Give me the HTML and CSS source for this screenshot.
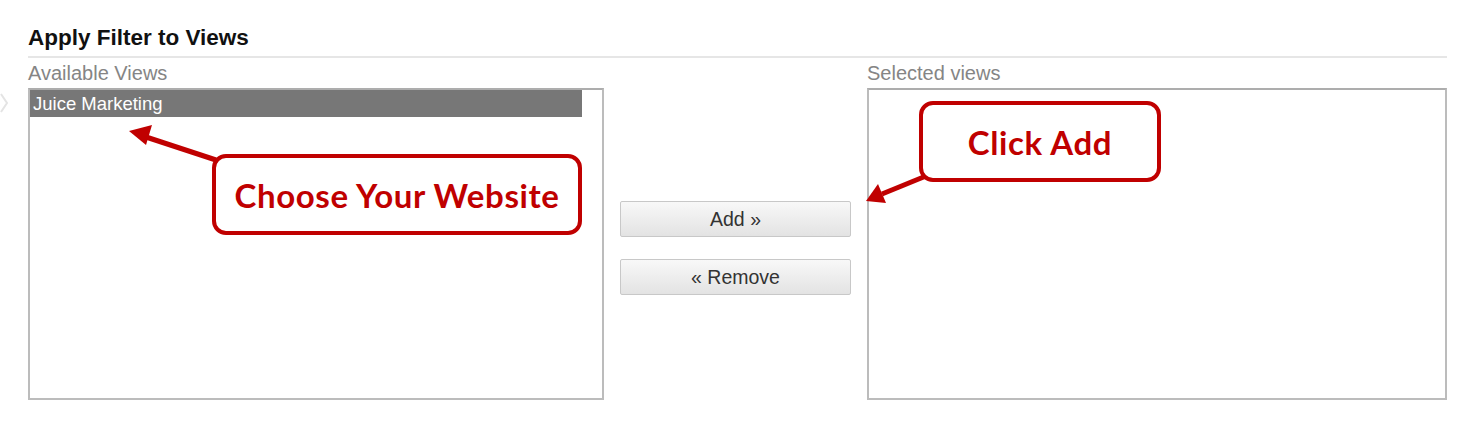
FILE: index.html
```html
<!DOCTYPE html>
<html lang="en">
<head>
    <meta charset="UTF-8">
    <title>Apply Filter to Views</title>
    <link rel="stylesheet" href="styles.css">
</head>
<body>
<div class="page">
    <h2 class="title">Apply Filter to Views</h2>

    <div class="views">
        <div class="col col-left">
            <div class="label">Available Views</div>
            <div class="listbox">
                <div class="item selected">Juice Marketing</div>
            </div>
        </div>

        <div class="col col-mid">
            <button class="btn">Add &raquo;</button>
            <button class="btn">&laquo; Remove</button>
        </div>

        <div class="col col-right">
            <div class="label">Selected views</div>
            <div class="listbox"></div>
        </div>
    </div>

    <!-- annotations drawn over the screenshot -->
    <svg class="arrows" width="1484" height="433" viewBox="0 0 1484 433">
        <polyline points="1,94 7,103 1,112" fill="none" stroke="#e4e4e4" stroke-width="2"/>
        <line x1="216" y1="160" x2="146" y2="137" stroke="#c00000" stroke-width="5"/>
        <polygon points="129,131 152,125 146,145" fill="#c00000"/>
        <line x1="926" y1="176" x2="882" y2="194" stroke="#c00000" stroke-width="5"/>
        <polygon points="866,201 878,184 886,203" fill="#c00000"/>
    </svg>

    <div class="callout callout-choose">Choose Your Website</div>
    <div class="callout callout-add">Click Add</div>
</div>
</body>
</html>
```

FILE: styles.css
```css
body {
    margin: 0;
    background: #fff;
    font-family: "Liberation Sans", Arial, sans-serif;
}
.page {
    position: relative;
    width: 1484px;
    height: 433px;
    padding: 24px 37px 0 28px;
    box-sizing: border-box;
}
.title {
    margin: 0;
    font-size: 22.5px;
    font-weight: bold;
    color: #111;
    line-height: 28px;
    padding-bottom: 4px;
    border-bottom: 2px solid #e6e6e6;
}
.views {
    display: flex;
    gap: 16px;
    margin-top: 4px;
}
.label {
    font-size: 20px;
    color: #858585;
    line-height: 23px;
    margin-bottom: 3px;
}
.col-left {
    width: 576px;
}
.col-right {
    flex: 1;
}
.col-mid {
    width: 231px;
    display: flex;
    flex-direction: column;
    gap: 22px;
    padding-top: 139px;
}
.listbox {
    height: 312px;
    border: 2px solid #bcbcbc;
    border-top-color: #adadad;
    box-sizing: border-box;
    background: #fff;
}
.item {
    font-size: 18.5px;
    line-height: 27px;
    padding-left: 3px;
    width: 552px;
    box-sizing: border-box;
}
.item.selected {
    background: #777;
    color: #fff;
}
.btn {
    height: 36px;
    font-family: "Liberation Sans", Arial, sans-serif;
    font-size: 19.5px;
    color: #333;
    border: 1px solid #c8c8c8;
    border-radius: 2px;
    background: linear-gradient(#f8f8f8, #e3e3e3);
}
.arrows {
    position: absolute;
    top: 0;
    left: 0;
    pointer-events: none;
}
.callout {
    position: absolute;
    border: 4px solid #c00000;
    border-radius: 14px;
    background: #fff;
    color: #c00000;
    font-family: Lato, "Open Sans", sans-serif;
    font-weight: bold;
    font-size: 33px;
    letter-spacing: 0.6px;
    display: flex;
    align-items: center;
    justify-content: center;
    box-sizing: border-box;
}
.callout-choose {
    left: 212px;
    top: 154px;
    width: 370px;
    height: 81px;
}
.callout-add {
    left: 919px;
    top: 101px;
    width: 242px;
    height: 81px;
}
```
